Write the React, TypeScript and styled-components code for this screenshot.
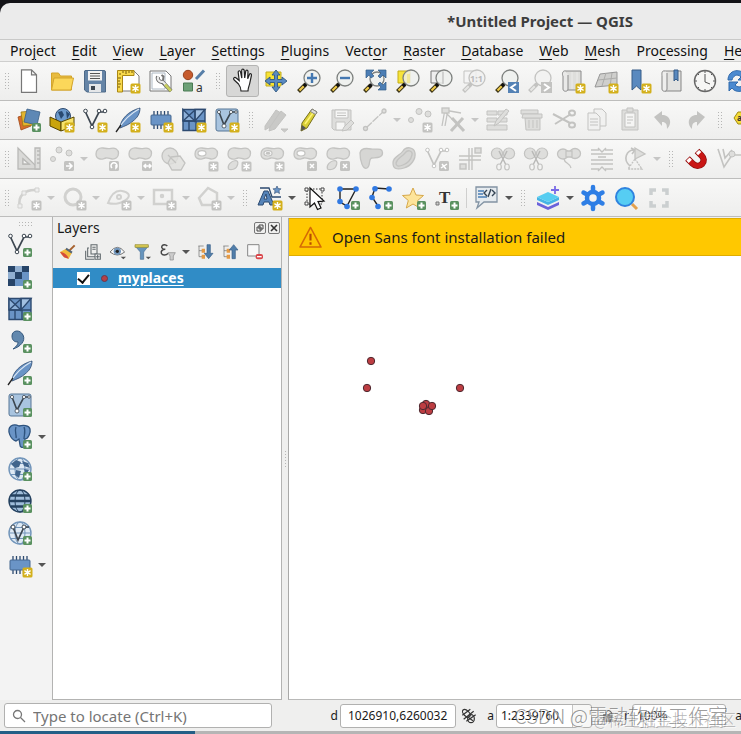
import React from "react";
import styled, { createGlobalStyle } from "styled-components";

const GlobalStyle = createGlobalStyle`
  * { box-sizing: border-box; }
  html, body { margin: 0; height: 100%; overflow: hidden; background: #131317; }
  #root { height: 100%; }
  body, button, input, select { font-family: "Noto Sans", "Open Sans", "Noto Sans CJK SC", sans-serif; font-size: 14px; color: #1a1a1a; }
  button { border: 0; background: none; padding: 0; }
`;

/* ---------- drawing helpers ---------- */

const G = "#c3c3c1";
const F = "#dededc";
const INK = "#3c4650";
const BLUE = "#6a94c6";
const NAVY = "#2d4a70";

const Plus = ({ x = 15, y = 15 }: { x?: number; y?: number }) => (
  <g>
    <rect x={x} y={y} width="9" height="9" rx="1.5" fill="#5a9160" />
    <path d={`M${x + 4.5} ${y + 1.5}v6M${x + 1.5} ${y + 4.5}h6`} stroke="#fff" strokeWidth="2" />
  </g>
);

const Spark = ({ off = false, x = 14.5, y = 14.5 }: { off?: boolean; x?: number; y?: number }) => (
  <g>
    <rect x={x} y={y} width="10" height="10" rx="1.5" fill={off ? G : "#d3b01c"} stroke="none" />
    <path
      d={`M${x + 5} ${y + 1.4}v7.2M${x + 1.9} ${y + 3.2}l6.2 3.6M${x + 8.1} ${y + 3.2}l-6.2 3.6`}
      stroke="#fff" strokeWidth="1.4"
    />
  </g>
);

const GreyBadge = ({ d }: { d: string }) => (
  <g>
    <rect x="14" y="14" width="10" height="10" rx="1.5" fill={G} stroke="none" />
    <path d={d} stroke="#fff" strokeWidth="1.5" fill="none" />
  </g>
);

const Lens = ({ off = false, x = 15, y = 9, r = 8 }: { off?: boolean; x?: number; y?: number; r?: number }) => (
  <g>
    <path d={`M${x - 6} ${y + 6}L1.5 22.5`} stroke={off ? G : "#3d3516"} strokeWidth="4" />
    <path d={`M${x - 8} ${y + 8}L2.5 21.5`} stroke={off ? "#e6e6e4" : "#f0cb4a"} strokeWidth="2.2" />
    <path d={`M${x - 5} ${y + 5}l-3.2 3.2`} stroke={off ? G : "#111"} strokeWidth="3" />
    <circle cx={x} cy={y} r={r} fill={off ? "#f1f1f0" : "#eef0ee"} fillOpacity=".82" stroke={off ? G : "#7d807e"} strokeWidth="1.3" />
  </g>
);

const VNodes = ({ c = INK }: { c?: string }) => (
  <g stroke={c} fill="none">
    <path d="M2.500 4L9 18 16 4h5" strokeWidth="1.7" />
    <g fill="#fff" strokeWidth="1">
      <circle cx="2.500" cy="3" r="1.8" /><circle cx="9" cy="19" r="1.8" />
      <circle cx="16" cy="3" r="1.8" /><circle cx="22" cy="3" r="1.8" />
    </g>
  </g>
);

const Feather = () => (
  <g>
    <path d="M4 20C4 12 12 3 24 0c0 6-3 10-7 13-3 3-8 5-13 7z" fill={BLUE} stroke={NAVY} strokeWidth=".8" />
    <path d="M3 20C8 12 14 6 23 1" fill="none" stroke="#dbe7f3" strokeWidth="1.2" />
    <path d="M0 24l5-7" stroke="#222" strokeWidth="1.3" />
  </g>
);

const Chip = () => (
  <g>
    <path d="M5 3v18M8.500 3v18M12 3v18M15.500 3v18M19 3v13" stroke={NAVY} strokeWidth="1.3" />
    <rect x="2" y="7" width="20" height="10" rx="1" fill={BLUE} stroke="#44668f" />
  </g>
);

const Mesh = () => (
  <g stroke={NAVY} strokeWidth="1.4">
    <path d="M1 1.500h22v21H1z" fill={BLUE} />
    <path d="M13 1.500h10L13 13z" fill="#a3c1e1" />
    <path d="M1 1.500l12 11.500H1z" fill="#8db0d8" />
    <path d="M1 13h22M13 2v11M7 13v9M14 13v9M13 2L1 13" fill="none" />
  </g>
);

const VBox = () => (
  <g>
    <rect x="1" y="1" width="22" height="22" rx="2" fill="#a9c4df" stroke="#577797" />
    <path d="M4 4l5 13L16 4h5" fill="none" stroke={INK} strokeWidth="1.6" />
    <g fill="#fff" stroke={INK} strokeWidth=".8">
      <circle cx="4" cy="4" r="1.6" /><circle cx="9" cy="18" r="2" /><circle cx="16" cy="4" r="1.6" /><circle cx="21" cy="4" r="1.3" />
    </g>
  </g>
);

const Blob = () => (
  <path d="M1 7c0-4 3-6.500 7-6 3 .4 5 1 8 .3 4-1 7.500 1 7.500 5s-3 6-6.500 5.700c-2-.2-4-1.500-6-1-3 .8-4 1.500-6 1C2.500 11.500 1 9.500 1 7z" fill={F} stroke={G} strokeWidth="1.3" />
);
const SmallBlob = () => <path d="M1.500 22c-1.500-4 3-8 7-8.500 4 0 2.500 7-1.500 8.500-2 .8-4 1-5.500 0z" fill={F} stroke={G} strokeWidth="1.2" />;
const Ring = () => <ellipse cx="8" cy="6.300" rx="4" ry="2.700" fill="#fff" stroke={G} strokeWidth="1.2" />;

const Cutters = () => (
  <g stroke={G} fill={F} strokeWidth="1.2">
    <ellipse cx="6" cy="6.500" rx="5.600" ry="5.500" /><ellipse cx="18" cy="6.500" rx="5.600" ry="5.500" />
    <path d="M8 4l7 14M16 4L9 18" fill="none" stroke="#b9b9b7" strokeWidth="1.5" />
    <ellipse cx="8" cy="20" rx="2.300" ry="3" fill="#f3f3f2" /><ellipse cx="16" cy="20" rx="2.300" ry="3" fill="#f3f3f2" />
  </g>
);

const Globe = ({ dark = false }: { dark?: boolean }) => (
  <g fill="none" stroke={dark ? "#24415f" : "#7295ba"}>
    <circle cx="12" cy="12" r="11" fill={dark ? "#9fbdda" : "#dfeaf4"} strokeWidth="1.4" />
    <ellipse cx="12" cy="12" rx="5" ry="11" />
    <path d="M1 12h22M3 6.500h18M3 17.500h18" strokeWidth={dark ? 2.6 : 1} />
  </g>
);

const Tree = () => <path d="M2 3h8M3 3v16M3 10h5M3 19h5" stroke="#6b6b6b" fill="none" />;

const shapes: Record<string, React.ReactNode> = {
  newProject: <path d="M4.500 .8h10l5 5v17.500h-15zM14.500 .8v5h5" fill="#fff" stroke="#777" strokeWidth="1.2" />,
  open: (
    <g stroke="#d3a52c">
      <path d="M1.500 21V4h7l2 3h11v14z" fill="#e8bb3f" />
      <path d="M1.500 21L4 9h19.500L21 21z" fill="#fbd75a" />
    </g>
  ),
  save: (
    <g>
      <path d="M2 1.500h19q1.500 0 1.500 1.500v20H4l-2.500-2V2z" fill="#6584a6" stroke="#4e6a88" />
      <path d="M5 2h14v9.500H5z" fill="#f2f2f2" /><path d="M7 4.500h10M7 7h10M7 9.500h10" stroke="#555" />
      <path d="M6 15h12v8H6z" fill="#e4e6e8" /><path d="M8 17h4v4H8z" fill="#3c4650" />
    </g>
  ),
  layout: (
    <g>
      <path d="M3 2h15l5 5v15H3z" fill="#fff" stroke="#7b7b7b" />
      <path d="M1.500 1.500H18v5H6.500V23h-5z" fill="#f8d94c" stroke="#aa8713" />
      <path d="M4 4v2M7 2v2M10 2v3M13 2v2M16 2v2M2 9h3M2 12h2M2 15h3M2 18h2" stroke="#765c0b" />
      <Spark />
    </g>
  ),
  layoutManager: (
    <g>
      <path d="M1 2h16l5 5v15H1z" fill="#fff" stroke="#777" /><path d="M3 4h13v16H3z" fill="none" stroke="#aeb9c4" />
      <path d="M9 7.500a4 4 0 0 0 4.500 5.300L22 22" fill="none" stroke="#666" strokeWidth="4" />
      <path d="M9 7.500a4 4 0 0 0 4.500 5.300L17 16" fill="none" stroke="#ededed" strokeWidth="2.200" />
      <path d="M16 15.500l6 6.500" stroke="#c8ce63" strokeWidth="2.800" />
      <path d="M12.500 6l2 1.500-.5 4" stroke="#777" strokeWidth="2" fill="none" />
    </g>
  ),
  style: (
    <g>
      <circle cx="6" cy="6" r="4.700" fill="#c65b2d" stroke="#97421e" />
      <path d="M14 10l8-8.500" stroke="#577fa8" strokeWidth="3" /><path d="M1.500 14h9v8h-9z" fill="#6da177" stroke="#4a7b54" />
      <text x="14" y="22.500" fontSize="12" fill="#333">a</text>
    </g>
  ),
  hand: (
    <path d="M7.500 15L3.200 11c-1.700-1.500.4-3.500 2-2l3 2.500-1-8c-.2-2.200 2-2.300 2.400-.4l1.200 6-.1-7.500c0-2 2.300-2 2.500 0l.5 7.300 1-6.500c.3-2 2.400-1.600 2.300.3l-.3 7 1.600-4c.8-1.700 2.500-1 2.100.8l-1.700 8c-.4 2.400-1.600 3.600-1.700 7.500H10c0-3-1.400-5.500-2.500-7z" fill="#fff" stroke="#222" strokeWidth="1.2" />
  ),
  panSelection: (
    <g>
      <path d="M2 3h15v14H2z" fill="#f8e332" stroke="#c2ac21" />
      <path d="M12 1l4 5h-2.500v4.500H18V8l5 4-5 4v-2.500h-4.500V18H16l-4 5-4-5h2.500v-4.500H6V16l-5-4 5-4v2.500h4.500V6H8z" fill="#5a8ac2" stroke="#315980" strokeWidth=".9" />
    </g>
  ),
  zoomIn: <g><Lens /><path d="M15 4v10M10 9h10" stroke="#4478b1" strokeWidth="2.400" /></g>,
  zoomOut: <g><Lens /><path d="M10 9h10" stroke="#4478b1" strokeWidth="2.400" /></g>,
  zoomFull: <g><Lens x={14} y={10} r={7} /><path d="M3 1h8L8 4l3 3-3 2-2-3-3 3zM23 1h-8l3 3-3 3 2 2 3-3 3 3zM23 21h-8l3-3-3-3 2-2 3 3 3-3z" fill="#4c7eb5" stroke="#315c88" strokeWidth=".7" /></g>,
  zoomSelection: <g><path d="M2 2h12v12H2z" fill="#f7e43b" stroke="#c4ad16" /><Lens /><path d="M11 5h3v9h-3z" fill="#f1e477" opacity=".6" /></g>,
  zoomLayer: <g><path d="M2 2h12v12H2z" fill="#eee" stroke="#777" /><Lens /><path d="M14 3v12" stroke="#bbb" /></g>,
  zoomNative: <g><path d="M2 2h12v12H2z" fill="#f4f4f4" stroke={G} /><Lens off /><text x="8" y="12.500" fontSize="9" fontWeight="700" fill="#bbb">1:1</text></g>,
  zoomLast: <g><Lens /><rect x="13" y="13" width="11" height="11" fill="#5482b5" /><path d="M21 15l-5 3.500 5 3.500" stroke="#fff" strokeWidth="2" fill="none" /></g>,
  zoomNext: <g><Lens off /><rect x="13" y="13" width="11" height="11" fill={G} /><path d="M16 15l5 3.500-5 3.500" stroke="#fff" strokeWidth="2" fill="none" /></g>,
  mapView: <g stroke="#8a8a8a"><path d="M5 2h15v19H5z" fill="#dededc" /><path d="M5 2C1 1 1 6 2 7v13c0 3 5 3 5 0V6" fill="#e9e9e8" /><path d="M11 3v17M16 3v17" stroke="#ebebea" /><Spark /></g>,
  view3d: <g stroke="#979797"><path d="M6 5l17-2v13L1 18z" fill="#cfcfcd" /><path d="M4 11l19-2M12 4L8 17M18 4l-2 13" fill="none" stroke="#adadab" /><Spark /></g>,
  bookmarkNew: <g><path d="M5 1h9v20l-4.500-4L5 21z" fill="#5989bf" stroke="#365d88" /><Spark /></g>,
  bookmarks: <g stroke="#858585"><path d="M5 2h16v20H5z" fill="#e2e2e0" /><path d="M5 2C1 1 2 6 2 7v13c0 3 5 3 5 0V4" fill="#eeeeed" /><path d="M14 1h4v11l-2-2-2 2z" fill="#5989bf" stroke="#365d88" /></g>,
  clock: <g><circle cx="12" cy="12" r="10.500" fill="#f6f6f5" stroke="#666" strokeWidth="1.400" /><path d="M12 5v8l5 2M12 2v2M12 20v2M2 12h2M20 12h2M5 5l1 1M19 5l-1 1M5 19l1-1M19 19l-1-1" stroke="#555" fill="none" /></g>,
  refresh: <g fill="#4b8ad0" stroke="#2f68aa"><path d="M2 11C2 1 14-1 18 5l3-3v9h-9l3-3c-4-4-8-1-9 3z" /><path d="M22 13c0 10-12 12-16 6l-3 3v-9h9l-3 3c4 4 8 1 9-3z" /></g>,

  dataSource: <g strokeWidth=".8"><path d="M1 9l9-3 4 12-10 4z" fill="#d96d2b" stroke="#9e4919" /><path d="M4 4l11-1 1 14-10 1z" fill="#e3b52e" stroke="#9c7915" /><path d="M10 1l13 3-3 13-13-3z" fill="#5e88b5" stroke="#3b5f86" /><Plus /></g>,
  geopackage: <g><circle cx="13" cy="8" r="7.500" fill="#6d9bcc" stroke={NAVY} /><path d="M8 4l4-1 2 4-3 4zM16 3l4 3-3 5z" fill="#294a70" /><path d="M0 9l11 5v9L0 18z" fill="#caa40c" stroke="#554400" /><path d="M11 14l13-5v9l-13 5z" fill="#f7e36c" stroke="#554400" /><Spark /></g>,
  vNew: <g><VNodes /><Spark /></g>,
  vAdd: <g><VNodes /><Plus /></g>,
  featherNew: <g><Feather /><Spark /></g>,
  featherAdd: <g><Feather /><Plus /></g>,
  chipNew: <g><Chip /><Spark /></g>,
  meshNew: <g><Mesh /><Spark /></g>,
  meshAdd: <g><Mesh /><Plus /></g>,
  vboxNew: <g><VBox /><Spark /></g>,
  vboxAdd: <g><VBox /><Plus /></g>,
  edits: <g fill="#c9c9c7" stroke={G}><path d="M1 18L12 2l5 3L6 19l-5 3z" /><path d="M6 19L17 3l5 4-11 14-6 2z" /><path d="M17 21h7l-3.500 3z" /></g>,
  pencil: <g><path d="M4 23l1-8L15 1l5 3L10 20z" fill="#d9ce35" stroke="#766d1d" /><path d="M8 16L17 3.500" stroke="#fff479" strokeWidth="1.500" /><path d="M15 1l5 3-1.500 2.500-5-3z" fill="#dcdcd8" stroke="#888" /><path d="M4 23l1-6 4 3z" fill="#555" /></g>,
  saveOff: <g stroke={G}><path d="M2 2h19v20H4l-2-2z" fill={F} /><path d="M5 2h13v8H5zM6 14h9v8H6z" fill="#f6f6f5" /><path d="M7 5h9M7 7.500h9M12 23l2-4 7-7 3 3-7 7z" fill={F} /></g>,
  line: <g stroke={G} strokeWidth="1.300"><path d="M3 20L21 3" strokeDasharray="8 1" /><circle cx="2.500" cy="20.500" r="2" fill={F} /><circle cx="21" cy="3" r="2" fill={F} /></g>,
  pointsNew: <g fill={F} stroke={G}><circle cx="3" cy="12" r="2.500" /><circle cx="11" cy="3.500" r="3" /><circle cx="20" cy="6" r="3" /><Spark off /></g>,
  vertexTool: <g stroke={G} strokeWidth="1.300"><path d="M4 1L1 18M7 1L4 18M3 2l17 3M3 3l9 9" /><rect x="1" y="0" width="7" height="5" fill={F} /><path d="M11 10l12 13M22 10L10 23" strokeWidth="3" /></g>,
  attributes: <g stroke={G} fill={F}><path d="M1 3h10v4H1zM12 3h9v4h-9zM1 10h10v4H1zM12 10h9v4h-9zM1 17h20v5H1z" /><path d="M8 18l2-5L20 1l3 2-10 12z" /></g>,
  trash: <g stroke={G} fill={F}><path d="M2 2h17v4H2zM6 10h15v12H7z" /><path d="M4 6h19v4H3zM10 12v8M14 12v8M18 12v8" /></g>,
  cut: <g fill="none" stroke={G} strokeWidth="2"><path d="M1 6l17 9M3 16L19 6" /><ellipse cx="20" cy="5" rx="3" ry="2.500" /><ellipse cx="20" cy="17" rx="3" ry="2.500" /></g>,
  copy: <g stroke={G} fill="#f1f1f0"><path d="M9 1h8l4 4v13H9z" /><path d="M3 5h8l4 4v13H3zM5 11h8M5 14h8M5 17h8" /></g>,
  paste: <g stroke={G} fill={F}><path d="M4 2h16v20H4z" /><path d="M7 5h10v14H7z" fill="#f5f5f4" /><path d="M9 0h6v4H9zM9 9h6M9 12h6M9 15h4" /></g>,
  undo: <path d="M3 9l8-6v4c8 0 11 8 5 14 0-5-1-7-5-7v4z" fill={G} />,
  redo: <path d="M21 9l-8-6v4C5 7 2 15 8 21c0-5 1-7 5-7v4z" fill={G} />,
  label: <g><path d="M1 10l4-6h22v12H5z" fill="#f4dc37" stroke="#a18a12" /><text x="4" y="13" fontSize="8" fontWeight="700" fill="#333">a</text></g>,

  ruler: <g stroke="#b9b9b7" fill={F} strokeWidth="1.300"><path d="M1 1v21h21zM6 12v5h6z" fill="#d9d9d7" /><path d="M6 12v5h6z" fill="#f5f5f4" /><path d="M18 1h5v21h-5zM20 4h3M20 8h3M20 12h3M20 16h3" /></g>,
  movePoints: <g fill={F} stroke={G}><circle cx="3" cy="12" r="2.500" /><circle cx="9" cy="3" r="3" /><circle cx="19" cy="6" r="3" /><GreyBadge d="M16 19h6m-3-3l3 3-3 3" /></g>,
  rotate: <g><Blob /><GreyBadge d="M17 21a3 3 0 1 1 4 0v-3" /></g>,
  scale: <g><Blob /><GreyBadge d="M16 19h7m-5-2l-2 2 2 2m3-4l2 2-2 2" /></g>,
  simplify: <g fill={F} stroke={G} strokeWidth="1.300"><circle cx="9" cy="9" r="8" /><path d="M10 10l9-1 5 7-4 7h-9l-4-7z" fillOpacity=".8" /><path d="M7 8l8 8" /></g>,
  ringAdd: <g><Blob /><Ring /><Spark off /></g>,
  partAdd: <g><Blob /><SmallBlob /><Spark off /></g>,
  ringFill: <g><Blob /><Ring /><ellipse cx="8" cy="6.300" rx="2.500" ry="1.500" fill={G} /><Spark off /></g>,
  ringDelete: <g><Blob /><Ring /><GreyBadge d="M17 17l4 4m0-4l-4 4" /></g>,
  partDelete: <g><Blob /><SmallBlob /><GreyBadge d="M17 17l4 4m0-4l-4 4" /></g>,
  reshape: <path d="M1 6c1-5 6-5 11-4s11-2 11.500 3.500S17 10.500 13 11s-1 8-5 10-7-7-7-15z" fill="#d6d6d4" stroke={G} strokeWidth="1.300" />,
  offset: <g fill="#d6d6d4" stroke={G} strokeWidth="1.300"><path d="M1 16C1 9 8 9 11 4s11-4 12 2-4 13-11 15S1 22 1 16z" /><path d="M4 16C5 11 10 10 13 6s8-2 7 2-4 8-9 10-7 1-7-2z" /></g>,
  splitV: <g><VNodes c={G} /><GreyBadge d="M16 21l6-4m-5 0l4 5" /></g>,
  mergeCross: <g stroke={G} strokeWidth="1.400" fill={F}><path d="M1 9h22M1 13h22M11 1v22M14 1v22" /><rect x="2" y="17" width="6" height="5" /><rect x="17" y="1" width="6" height="5" /></g>,
  cutters: <Cutters />,
  mergeBlob: <g stroke={G} fill={F} strokeWidth="1.300"><ellipse cx="6" cy="7" rx="5.500" ry="5" /><ellipse cx="18" cy="6.500" rx="5.500" ry="5" /><path d="M9 4h6v6H9z" /><path d="M7 12c1 5 5 3 7 9" fill="none" /></g>,
  trims: <path d="M1 3h8M15 3h8M1 7h22M1 13h22M1 17h22M1 22h8M15 22h8M8 1l4 4 4-4M8 24l4-4 4 4M8 10h8" stroke={G} fill="none" strokeWidth="1.400" />,
  rotateSym: <g stroke={G} fill={F} strokeWidth="1.300"><path d="M7 19C-1 12 4 3 11 3m-3-2l4 2-3 4" fill="none" strokeWidth="1.600" /><path d="M12 1l10 6-10 5z" /><path d="M12 12l7 10H5z" fill="none" strokeDasharray="2 1" /></g>,
  magnet: (
    <g fill="none">
      <path d="M3.500 11.500l5 5c3 3 7 3 9.500.5s2-6-.5-8.500l-4.500-4.500" stroke="#8e1010" strokeWidth="6.500" />
      <path d="M4 12l4.500 4.500c3 3 7 3 9.500.5s2-6-.5-8.500L13.500 4.500" stroke="#c91614" strokeWidth="5" />
      <path d="M4 12l2.300 2.300M13.500 4.500l2.200 2.200" stroke="#fff" strokeWidth="4.500" />
    </g>
  ),
  snapV: <g><path d="M1 2l6 18L15 8h9M6 2l2 9 7-8" stroke={G} strokeWidth="1.600" fill="none" /><circle cx="15" cy="7" r="3" fill={F} stroke={G} /></g>,

  arc: <g fill="none" stroke="#d1d1cf"><path d="M3 21C0 10 8 3 20 4" strokeWidth="2.500" /><path d="M1 18h4v4H1zM5 5h4v4H5zM18 2h4v4h-4z" fill="#eee" /><Spark off /></g>,
  circle: <g><circle cx="11" cy="11" r="8" fill="none" stroke="#d1d1cf" strokeWidth="3" /><Spark off /></g>,
  ellipse: <g fill="none" stroke="#d1d1cf" strokeWidth="2"><path d="M1 17c3-8 8-13 14-12s9 4 5 8S8 19 1 17z" /><circle cx="12" cy="11" r="2" /><Spark off /></g>,
  rect: <g fill="none" stroke="#d1d1cf" strokeWidth="2.500"><path d="M2 4h18v14H2z" /><circle cx="10" cy="10" r="1" /><Spark off /></g>,
  polygon: <g fill="none" stroke="#d1d1cf" strokeWidth="2.500"><path d="M2 12l9-10 9 5v12H5z" /><Spark off /></g>,
  annotation: <g><path d="M2 2h9l3 9h9" stroke={NAVY} strokeWidth="1.300" fill="none" /><path d="M0 19L6 5h4l6 14h-4l-1-3H6l-1 3zm6-6h3L8 8z" fill="#5583b8" stroke={NAVY} /><path d="M19 0l1.200 2.600 2.800.2-2 2 .5 2.700L19 6l-2.500 1.500.5-2.700-2-2 2.800-.2z" fill={BLUE} stroke={NAVY} strokeWidth=".6" /><Spark /></g>,
  select: <g><path d="M4 3h15v15H4z" fill="none" stroke="#333" strokeDasharray="1.500 1.500" /><path d="M2 2h3v3H2zM18 2h3v3h-3zM2 16h3v3H2z" fill="#fff" stroke="#444" /><path d="M7 2l14 13-6 .6 3 6.400-3.500 1.500-3-6.500L7 21z" fill="#fff" stroke="#111" strokeWidth="1.200" /></g>,
  polyAdd: <g><path d="M4 3h16l-9 17-7-4z" fill="none" stroke="#222" strokeWidth="1.400" /><g fill="#3179e2"><circle cx="4" cy="3" r="2.800" /><circle cx="20" cy="3" r="2.800" /><circle cx="4" cy="15.500" r="2.800" /><circle cx="11" cy="20.500" r="2.800" /></g><Plus /></g>,
  lineAdd: <g><path d="M20 3L6 2 3 11l6 9" fill="none" stroke="#222" strokeWidth="1.400" /><g fill="#3179e2"><circle cx="20" cy="3" r="2.800" /><circle cx="6" cy="2.800" r="2.800" /><circle cx="3" cy="11.500" r="2.800" /><circle cx="9" cy="20.500" r="2.800" /></g><Plus /></g>,
  starAdd: <g><path d="M11 2l3 7 7.500.5-5.800 5 2 7.500-6.700-4-6.700 4 2-7.500L.5 9.500 8 9z" fill="#fde49a" stroke="#d6a84b" /><Plus /></g>,
  textAdd: <g><text x="4" y="17" fontSize="17" fontWeight="700" fontFamily="Liberation Serif, serif" fill="#333">T</text><path d="M1 16h3v3H1z" fill="#ccc" stroke="#777" /><Plus /></g>,
  note: <g><path d="M1 1h21v15H9l-7 6 2-6H1z" fill="#e6ebef" stroke="#8293a3" strokeWidth="1.300" /><path d="M3 5h6M3 8h5M3 11h9" stroke="#4a7fb7" strokeWidth="1.500" /><path d="M12 4l-3 3 3 3M17 4l3 3-3 3M16 3l-3 8" fill="none" stroke="#344454" strokeWidth="1.400" /></g>,
  layers: <g><path d="M1 16l11 5 11-5v3l-11 5-11-5z" fill="#6b62da" /><path d="M1 11l11 5 11-5v3l-11 5-11-5z" fill="#45b4e4" /><path d="M1 11l11-5 11 5-11 5z" fill="#56cdf1" /><path d="M19 0v8M15 4h8" stroke="#796be7" strokeWidth="1.800" /></g>,
  gear: <g fill="none" stroke="#2e7ee5"><circle cx="12" cy="12" r="6" strokeWidth="4.500" /><path d="M12 1v4M12 19v4M2.500 6.500l3.500 2M18 15.500l3.500 2M2.500 17.500l3.500-2M18 8.500l3.500-2" strokeWidth="4.500" strokeLinecap="round" /></g>,
  find: <g><path d="M18 18l5 5" stroke="#e3a14f" strokeWidth="3" /><circle cx="11" cy="11" r="9" fill="#56cdf3" stroke="#2f83df" strokeWidth="2" /></g>,
  expand: <path d="M4 9V4h5M15 4h5v5M20 15v5h-5M9 20H4v-5" fill="none" stroke="#cbcfd0" strokeWidth="3.500" />,

  raster: <g><path d="M0 1h21v20H0z" fill={BLUE} /><path d="M0 1h7v6H0zM14 1h7v6h-7zM7 7h7v7H7zM0 14h7v7H0z" fill="#274468" /><path d="M7 1h7v6H7zM0 7h7v7H0z" fill="#91afd1" /><Plus /></g>,
  comma: <g><path d="M4 7c0-6 8-7 11-1 3 6-3 12-10 14 4-3 5-5 5-7-4 0-6-2-6-6z" fill="#6288ae" stroke="#34577d" /><Plus /></g>,
  elephant: <g><path d="M3 1c3-2 6-1 8 0 4-1 10-1 11 3s-2 10-5 10l-1 8c-2 1-4 0-4-2l-1-6-3 2C3 15-2 5 3 1z" fill={BLUE} stroke="#2e537e" strokeWidth="1.300" /><path d="M8 2c-2 5 1 8 0 11M16 2c2 4 0 8 0 12" fill="none" stroke="#2e537e" strokeWidth="1.300" /><Plus /></g>,
  world: <g><Globe /><path d="M3 7l5-4 5 2-2 5-4 1zM14 4l6 2 2 5-6-2zM8 13l5 1-2 7-4-3zM16 12l5 1-3 5z" fill="#41658c" /><Plus /></g>,
  globe: <g><Globe dark /><Plus /></g>,
  globeV: <g><Globe /><path d="M5 6l5 13 6-13h5" fill="none" stroke={INK} strokeWidth="1.700" /><circle cx="5" cy="6" r="2" fill="#fff" stroke={INK} /><circle cx="16" cy="6" r="2" fill="#fff" stroke={INK} /><Plus /></g>,

  brush: <g><path d="M14 10l8-8" stroke="#a5602e" strokeWidth="3" /><path d="M0 12l9-5 9 6-5 9c-5 0-10-4-13-10z" fill="#f1b93c" /><path d="M0 12c5 0 11 4 13 10l-7-2z" fill="#d54a3c" /><path d="M9 7l9 6" stroke="#567" strokeWidth="3" /></g>,
  group: <g fill="none" stroke="#626a6e" strokeWidth="1.600"><path d="M9 1h9v14H9zM6 6H4v13h11M1 10v13h13M11 5h5M11 8h5" /><path d="M15 15h8v8h-8z" fill="#f4f4f4" /><path d="M19 16v6M16 19h6" /></g>,
  eye: <g><path d="M0 12q11-14 22 0-11 9-22 0z" fill="#f9f9f9" stroke="#757575" strokeWidth="1.500" /><circle cx="11" cy="11" r="5.500" fill="#7297bd" /><circle cx="11" cy="11" r="2.500" fill="#222" /><path d="M16 19h8l-4 4z" fill="#555" /></g>,
  filter: <g><path d="M0 3h20l-7 9v11H8V12z" fill="#6694bd" stroke="#486f94" /><path d="M0 1h20v4H0z" fill="#d9cb54" stroke="#93892f" /><path d="M16 19h8l-4 4z" fill="#555" /></g>,
  epsilon: <g><path d="M11 3C7-1 1 2 3 6c1 2 3 2 5 2-4 0-7 2-6 6 1 3 7 4 10 0" fill="none" stroke="#444" strokeWidth="2.200" /><path d="M12 13h11l-3 5v6h-5v-6z" fill="#ccc" stroke="#888" /></g>,
  expandTree: <g><Tree /><path d="M7 7h5v6H7zM7 16h5v6H7z" fill="#e59a45" /><path d="M15 1h5v13h4l-6.500 8L11 14h4z" fill="#517eaa" stroke="#385f89" /></g>,
  collapseTree: <g><Tree /><path d="M7 7h5v6H7zM7 16h5v6H7z" fill="#e59a45" /><path d="M15 22h5V9h4l-6.500-8L11 9h4z" fill="#517eaa" stroke="#385f89" /></g>,
  removeLayer: <g><path d="M1 1h17v17H1z" fill="#f8f8f8" stroke="#888" strokeWidth="1.500" /><rect x="13" y="15" width="11" height="8" rx="3" fill="#d9474b" /><path d="M15 19h7" stroke="#fff" strokeWidth="2" /></g>,
  extents: <g fill="none" stroke="#333" strokeWidth="1.800"><ellipse cx="8" cy="8" rx="4" ry="7" transform="rotate(-45 8 8)" /><path d="M2 11L14 2M4 17L19 5M8 20L22 10" /><ellipse cx="15" cy="16" rx="5" ry="6" /><path d="M12 15l6 4" /></g>,
  lock: <g fill="none" stroke="#666" strokeWidth="2"><path d="M3 10h15v11H3z" fill="#999" /><path d="M7 10V6q4-7 9 0v4" /></g>,
};

/* ---------- shared parts ---------- */

const Svg = styled.svg<{ $size: number }>`
  display: block;
  flex: none;
  width: ${p => p.$size}px;
  height: ${p => p.$size}px;
  overflow: visible;
`;
const Icon = ({ name, size = 24 }: { name: string; size?: number }) => (
  <Svg $size={size} viewBox="0 0 24 24" aria-hidden="true">{shapes[name]}</Svg>
);

const ToolButton = styled.button<{ $active?: boolean; $small?: boolean }>`
  flex: none;
  display: grid;
  place-items: center;
  width: ${p => (p.$small ? 25 : 33)}px;
  height: ${p => (p.$small ? 24 : 32)}px;
  border-radius: 3px;
  border: 1px solid ${p => (p.$active ? "#b4b4b3" : "transparent")};
  background: ${p => (p.$active ? "#d7d7d6" : "transparent")};
`;
const ArrowButton = styled.button`
  flex: none;
  width: 12px;
  height: 24px;
  display: grid;
  place-items: center;
`;
const Caret = styled.span<{ $off?: boolean }>`
  border: 4px solid transparent;
  border-top-color: ${p => (p.$off ? "#c6c6c5" : "#555")};
  border-bottom: 0;
`;
const Grip = styled.span<{ $wide?: boolean }>`
  flex: none;
  width: ${p => (p.$wide ? 16 : 6)}px;
  height: ${p => (p.$wide ? 6 : 18)}px;
  background: radial-gradient(circle, #b6b6b5 0 25%, transparent 30%) 0 0 / 3px 3px;
`;
const GripSlot = styled.span`
  flex: none;
  width: 16px;
  display: grid;
  place-items: center;
`;
const Divider = styled.span`
  flex: none;
  width: 1px;
  height: 20px;
  margin: 0 3px;
  background: #cfcfce;
`;

/* ---------- window ---------- */

const Shell = styled.div`
  height: 100vh;
  padding-top: 3px;
  display: flex;
  flex-direction: column;
  overflow: hidden;
`;
const TitleBar = styled.header`
  flex: none;
  height: 37px;
  padding-left: 447px;
  display: flex;
  align-items: center;
  border-bottom: 1px solid #c9c9c8;
  border-top-left-radius: 10px;
  background: #ebebeb;
  color: #3d3d3d;
  font-size: 15px;
  font-weight: 700;
  white-space: nowrap;
`;
const MenuBar = styled.nav`
  flex: none;
  height: 22px;
  padding-left: 10px;
  display: flex;
  align-items: center;
  gap: 16px;
  overflow: hidden;
  border-bottom: 1px solid #cfcfce;
  background: #efefee;
`;
const MenuItem = styled.button`
  flex: none;
  line-height: 20px;
  color: #111;
  u { text-underline-offset: 3px; text-decoration-thickness: 1px; }
`;
const ToolRow = styled.div`
  flex: none;
  height: 39px;
  display: flex;
  align-items: center;
  overflow: hidden;
  border-bottom: 1px solid #bdbdbc;
  background: linear-gradient(#f8f8f7, #eeeeed);
  & > ${Grip} { margin: 0 2px 0 4px; }
  &:last-of-type { height: 38px; }
`;
const Body = styled.main`
  flex: 1;
  min-height: 0;
  display: flex;
  background: #efefee;
`;
const SideBar = styled.aside`
  flex: none;
  width: 52px;
  padding-top: 4px;
  display: flex;
  flex-direction: column;
  background: #f3f3f3;
  & > ${Grip} { margin: 0 0 2px 18px; }
`;
const SideRow = styled.div`
  display: flex;
  align-items: center;
  padding-left: 3px;
`;
const Panel = styled.section`
  flex: none;
  width: 230px;
  display: flex;
  flex-direction: column;
  border: 1px solid #b3b3b2;
  border-top: 0;
`;
const PanelHead = styled.div`
  flex: none;
  height: 22px;
  padding: 0 1px 0 4px;
  display: flex;
  align-items: center;
  gap: 2px;
  h2 { flex: 1; margin: 0; font-size: 14px; font-weight: 400; line-height: 20px; }
`;
const FrameButton = styled.button`
  width: 12px;
  height: 12px;
  display: grid;
  place-items: center;
  border: 1px solid #777;
  border-radius: 2px;
`;
const PanelTools = styled.div`
  flex: none;
  height: 26px;
  margin-bottom: 3px;
  padding-left: 2px;
  display: flex;
  align-items: center;
`;
const LayerTree = styled.ul`
  flex: 1;
  margin: 0;
  padding: 0;
  list-style: none;
  background: #fff;
`;
const LayerRow = styled.li`
  height: 20px;
  padding-left: 24px;
  display: flex;
  align-items: center;
  background: #308cc6;
  label { color: #fff; font-weight: 700; line-height: 20px; text-decoration: underline; text-underline-offset: 2px; }
`;
const LayerCheck = styled.input`
  appearance: none;
  width: 13px;
  height: 13px;
  margin: 0;
  display: grid;
  place-items: center;
  background: #fff;
  &:checked::after {
    content: "";
    width: 5px;
    height: 9px;
    margin-top: -2px;
    border: solid #111;
    border-width: 0 2px 2px 0;
    transform: rotate(40deg);
  }
`;
const LayerSymbol = styled.span`
  width: 7px;
  height: 7px;
  margin: 0 10px 0 11px;
  border-radius: 50%;
  border: 1px solid #69364b;
  background: #b53f47;
`;
const Splitter = styled.div`
  flex: none;
  width: 6px;
  display: grid;
  place-items: center;
  & > ${Grip} { width: 3px; }
`;
const Workspace = styled.section`
  flex: 1;
  min-width: 0;
  margin-top: 1px;
  display: flex;
  flex-direction: column;
  border-left: 1px solid #a9a9a8;
  border-bottom: 1px solid #b9b9b8;
  background: #fff;
`;
const MessageBar = styled.div`
  flex: none;
  height: 38px;
  padding-left: 10px;
  display: flex;
  align-items: center;
  gap: 10px;
  border: 1px solid #dfad00;
  border-width: 1px 0;
  background: #ffc800;
  font-size: 15px;
  line-height: 20px;
  white-space: nowrap;
`;
const MapCanvas = styled.svg`
  flex: none;
  display: block;
  width: 452px;
  height: 200px;
`;

/* ---------- status bar ---------- */

const StatusBar = styled.footer`
  flex: none;
  position: relative;
  height: 31px;
  padding: 0 4px;
  display: flex;
  align-items: center;
  overflow: hidden;
  background: #efefee;
  font-size: 12px;
`;
const Field = styled.input`
  height: 24px;
  padding: 0 7px;
  border: 1px solid #b1b1b0;
  border-radius: 3px;
  background: #fff;
  font-size: 12px;
  outline: 0;
`;
const Locator = styled.label`
  flex: none;
  width: 268px;
  height: 25px;
  padding-left: 7px;
  display: flex;
  align-items: center;
  gap: 7px;
  border: 1px solid #b1b1b0;
  border-radius: 3px;
  background: #fff;
  input { flex: 1; min-width: 0; padding: 0; border: 0; outline: 0; background: none; font-size: 15px; }
  input::placeholder { color: #757575; opacity: 1; }
`;
const Clip = styled.label<{ $w: number }>`
  flex: none;
  width: ${p => p.$w}px;
  display: flex;
  justify-content: flex-end;
  overflow: hidden;
  line-height: 20px;
`;
const CoordField = styled(Field)`
  flex: none;
  width: 116px;
  margin: 0 4px 0 2px;
`;
const ScaleSelect = styled.select`
  flex: none;
  appearance: none;
  width: 96px;
  height: 24px;
  margin-left: 2px;
  padding: 0 4px;
  border: 1px solid #b1b1b0;
  border-radius: 3px;
  background: linear-gradient(90deg, #fff 75px, #c4c4c3 75px 76px, #f7f7f6 76px);
  font-size: 12px;
`;
const Magnifier = styled(Field)`
  flex: none;
  width: 94px;
  margin: 0 8px 0 3px;
  padding: 0 4px;
`;
const StatusIcon = styled.button`
  flex: none;
  display: grid;
  place-items: center;
  width: 17px;
  height: 24px;
`;
const Mark = styled.span<{ $small?: boolean }>`
  position: absolute;
  right: ${p => (p.$small ? 5 : 13)}px;
  bottom: ${p => (p.$small ? 0 : 3)}px;
  color: ${p => (p.$small ? "rgba(110,110,110,.5)" : "rgba(100,100,100,.65)")};
  font-family: "Noto Sans CJK SC", sans-serif;
  font-size: ${p => (p.$small ? 16 : 20)}px;
  font-weight: 300;
  line-height: 24px;
  text-shadow: 1px 1px 0 rgba(255, 255, 255, .7);
  white-space: nowrap;
  pointer-events: none;
`;
const Desktop = styled.div`
  flex: none;
  height: 3px;
  background: linear-gradient(90deg, #235e86 0 195px, #b5b5b5 195px);
`;

/* ---------- data ---------- */

/* "|" grip, ">" drop-down arrow, "<" disabled arrow, "/" divider */
const rows: string[] = [
  "newProject open save layout layoutManager style | hand panSelection zoomIn zoomOut zoomFull zoomSelection zoomLayer zoomNative zoomLast zoomNext mapView view3d bookmarkNew bookmarks clock refresh",
  "dataSource geopackage vNew featherNew chipNew meshNew vboxNew | edits pencil saveOff line < pointsNew vertexTool < attributes trash cut copy paste undo redo | label",
  "ruler movePoints < rotate scale simplify ringAdd partAdd ringFill ringDelete partDelete reshape offset splitV mergeCross cutters cutters mergeBlob trims rotateSym < | magnet snapV",
  "arc < circle < ellipse < rect < polygon < | annotation > select polyAdd lineAdd starAdd textAdd / note > | layers > gear find expand",
];
const side = ["vAdd", "raster", "meshAdd", "comma", "featherAdd", "vboxAdd", "elephant >", "world", "globe", "globeV", "chipNew >"];
const layerTools = "brush group eye filter epsilon > expandTree collapseTree removeLayer";
const menus = ["Pro&ject", "&Edit", "&View", "&Layer", "&Settings", "&Plugins", "Vect&or", "&Raster", "&Database", "&Web", "&Mesh", "Pro&cessing", "&Help"];
const places = [[82, 105], [78, 132], [171, 132], [137, 148], [134, 154], [140, 155], [143, 150], [134, 150]];

const Tools = ({ spec, small }: { spec: string; small?: boolean }) => (
  <>
    {spec.split(" ").map((t, i) => {
      if (t === "|") return <GripSlot key={i}><Grip /></GripSlot>;
      if (t === "/") return <Divider key={i} />;
      if (t === ">" || t === "<") return <ArrowButton key={i} aria-label="More options"><Caret $off={t === "<"} /></ArrowButton>;
      return (
        <ToolButton key={i} aria-label={t} $active={t === "hand"} $small={small}>
          <Icon name={t} size={small ? 16 : 24} />
        </ToolButton>
      );
    })}
  </>
);

const Menu = ({ text }: { text: string }) => {
  const [before, rest] = text.split("&");
  return <MenuItem>{before}<u>{rest[0]}</u>{rest.slice(1)}</MenuItem>;
};

export default function App() {
  return (
    <Shell>
      <GlobalStyle />
      <TitleBar>*Untitled Project — QGIS</TitleBar>
      <MenuBar>{menus.map(m => <Menu key={m} text={m} />)}</MenuBar>
      <div>
        {rows.map((r, i) => <ToolRow key={i}><Grip /><Tools spec={r} /></ToolRow>)}
      </div>
      <Body>
        <SideBar>
          <Grip $wide />
          {side.map(s => <SideRow key={s}><Tools spec={s} /></SideRow>)}
        </SideBar>
        <Panel>
          <PanelHead>
            <h2>Layers</h2>
            <FrameButton aria-label="Float panel">
              <Svg $size={8} viewBox="0 0 8 8"><path d="M3 1h4v4H3zM1 3h4v4H1z" fill="none" stroke="#444" /></Svg>
            </FrameButton>
            <FrameButton aria-label="Close panel">
              <Svg $size={8} viewBox="0 0 8 8"><path d="M1 1l6 6M7 1L1 7" stroke="#333" strokeWidth="1.600" /></Svg>
            </FrameButton>
          </PanelHead>
          <PanelTools><Tools spec={layerTools} small /></PanelTools>
          <LayerTree>
            <LayerRow>
              <LayerCheck type="checkbox" id="layer-myplaces" defaultChecked />
              <LayerSymbol />
              <label htmlFor="layer-myplaces">myplaces</label>
            </LayerRow>
          </LayerTree>
        </Panel>
        <Splitter><Grip /></Splitter>
        <Workspace>
          <MessageBar role="alert">
            <Svg $size={23} viewBox="0 0 24 24">
              <path d="M12 1.500L23 22H1z" fill="#ffc400" stroke="#d56a05" strokeWidth="1.600" strokeLinejoin="round" />
              <path d="M12 8v7M12 17v2.500" stroke="#b64c00" strokeWidth="2.200" />
            </Svg>
            Open Sans font installation failed
          </MessageBar>
          <MapCanvas viewBox="0 0 452 200">
            {places.map(([x, y]) => (
              <circle key={`${x}-${y}`} cx={x} cy={y} r="3.700" fill="#bd3d42" stroke="#4d2930" />
            ))}
          </MapCanvas>
        </Workspace>
      </Body>
      <StatusBar>
        <Locator>
          <Svg $size={14} viewBox="0 0 14 14"><circle cx="5.500" cy="5.500" r="4" fill="none" stroke="#777" strokeWidth="1.300" /><path d="M8.500 8.500L13 13" stroke="#777" strokeWidth="1.300" /></Svg>
          <input placeholder="Type to locate (Ctrl+K)" aria-label="Locate" />
        </Locator>
        <Clip $w={66} htmlFor="coord">d</Clip>
        <CoordField id="coord" defaultValue="1026910,6260032" />
        <StatusIcon aria-label="Toggle extents"><Icon name="extents" size={16} /></StatusIcon>
        <Clip $w={17} htmlFor="scale">a</Clip>
        <ScaleSelect id="scale"><option>1:2339760</option></ScaleSelect>
        <Clip as="span" $w={8} />
        <StatusIcon aria-label="Lock scale"><Icon name="lock" size={14} /></StatusIcon>
        <Clip $w={12} htmlFor="magnifier">r</Clip>
        <Magnifier id="magnifier" defaultValue="100%" />
        <Clip as="span" $w={8}>a</Clip>
        <Mark>CSDN @雷动软件工作室</Mark>
        <Mark $small>@稀土掘金技术社区</Mark>
      </StatusBar>
      <Desktop />
    </Shell>
  );
}
